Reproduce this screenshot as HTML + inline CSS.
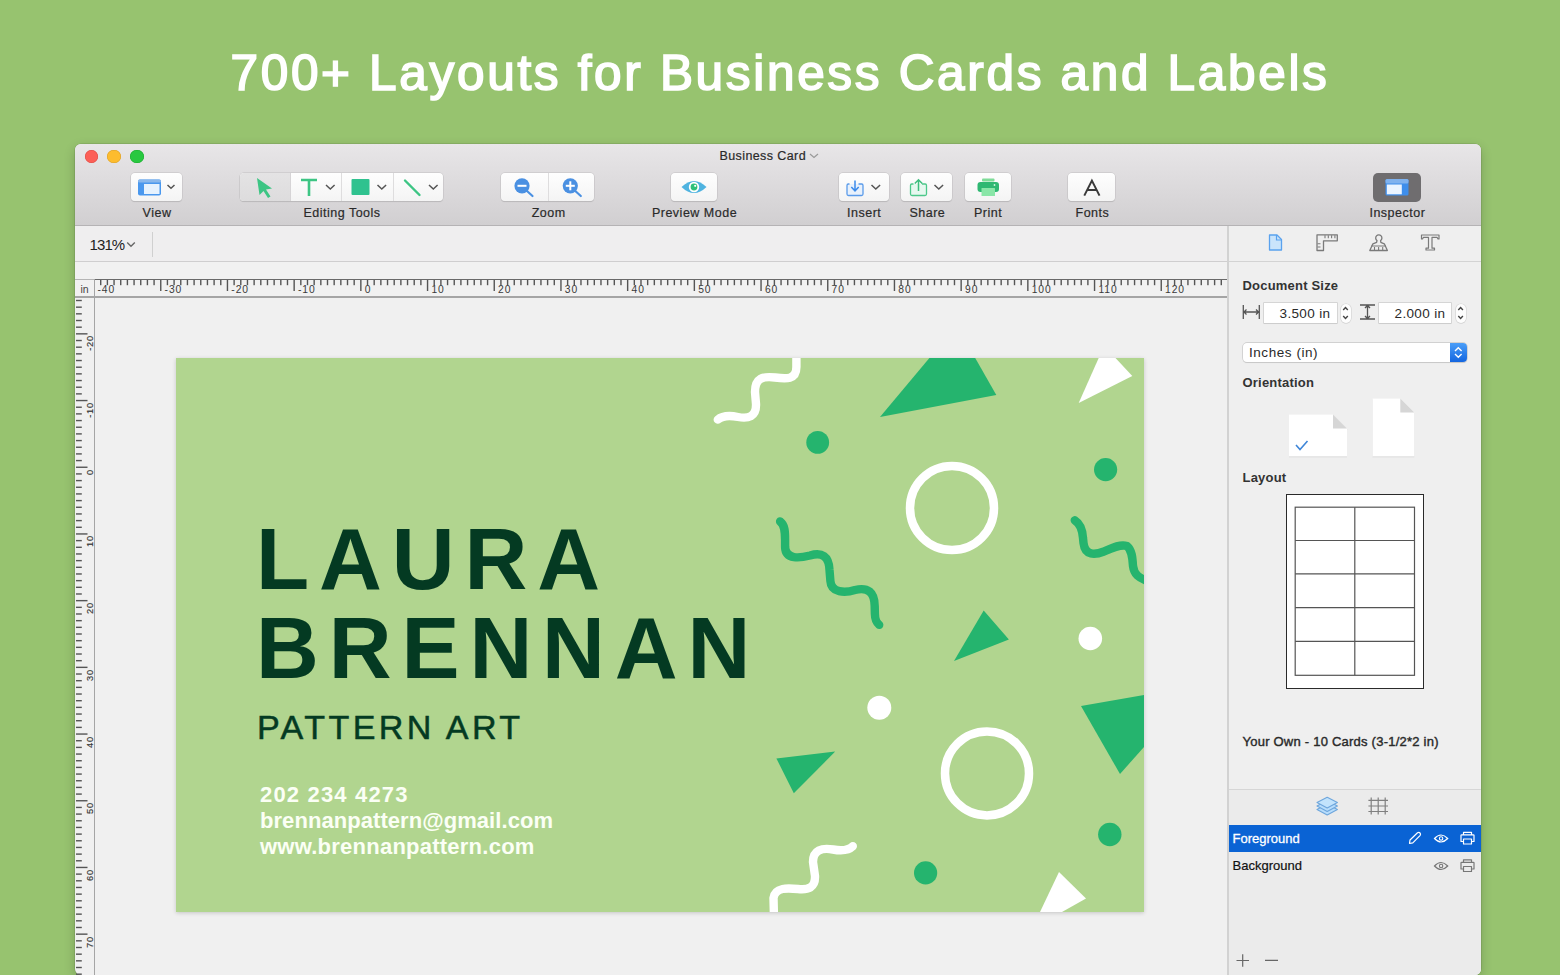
<!DOCTYPE html>
<html><head><meta charset="utf-8">
<style>
*{margin:0;padding:0;box-sizing:border-box}
html,body{width:1560px;height:975px;overflow:hidden;background:#97C36F;font-family:"Liberation Sans",sans-serif;position:relative}
.a{position:absolute}
.t{position:absolute;white-space:nowrap;line-height:1}
#title{left:0;width:1560px;top:48px;text-align:center;color:#fff;font-size:49.5px;letter-spacing:2.68px;-webkit-text-stroke:1.7px #fff}
#win{left:75px;top:144px;width:1406px;height:831px;background:#F0F0F0;border-radius:6px;box-shadow:0 0 0 0.5px rgba(0,0,0,0.15),0 4px 12px rgba(0,0,0,0.2)}
#tb{left:75px;top:144px;width:1406px;height:82px;background:linear-gradient(#E8E6E8,#D1CFD1);border-radius:6px 6px 0 0;border-bottom:1px solid #B5B3B5}
.tl{position:absolute;top:149.5px;width:13.4px;height:13.4px;border-radius:50%}
.btn{position:absolute;top:173px;height:28px;background:linear-gradient(#FEFEFE,#F4F4F4);border-radius:4px;box-shadow:0 0 0 0.6px #C4C2C4,0 0.6px 0.8px rgba(0,0,0,0.18)}
.lab{position:absolute;top:207.4px;font-size:12.5px;letter-spacing:0.5px;line-height:1;color:#2a2a2a;-webkit-text-stroke:0.2px #2a2a2a;white-space:nowrap;transform:translateX(-50%)}
.hl{position:absolute;top:285.3px;font-size:10.3px;letter-spacing:0.9px;line-height:1;color:#3a3a3a}
.vl{position:absolute;font-size:9.3px;letter-spacing:0.8px;line-height:1;color:#333;-webkit-text-stroke:0.15px #333;transform-origin:0 0;transform:rotate(-90deg) translateX(-100%)}
.ins{font-size:13px;color:#2a2a2a}
.hd{font-weight:bold;font-size:13px;letter-spacing:0.2px;color:#333}

</style></head><body>
<div id="title" class="t">700+ Layouts for Business Cards and Labels</div>
<div id="win" class="a"></div>
<div id="tb" class="a"></div>
<div class="tl" style="left:84.6px;background:#FC5F57;box-shadow:inset 0 0 0 0.6px #DD4B43"></div>
<div class="tl" style="left:107.4px;background:#FDBC2E;box-shadow:inset 0 0 0 0.6px #DC9F25"></div>
<div class="tl" style="left:130.2px;background:#28C840;box-shadow:inset 0 0 0 0.6px #1AAB2D"></div>
<div class="t" style="left:719.5px;top:149.8px;font-size:12.5px;letter-spacing:0.4px;color:#2a2a2a;-webkit-text-stroke:0.2px #2a2a2a">Business Card</div>
<svg class="a" style="left:809px;top:153px" width="10" height="6"><path d="M1 1 L5 4.5 L9 1" stroke="#9a9a9a" stroke-width="1.2" fill="none"/></svg>

<!-- toolbar buttons -->
<div class="btn" style="left:131px;width:51px"></div>
<div class="btn" style="left:240px;width:203px;overflow:hidden"><div class="a" style="left:0;top:0;width:50px;height:28px;background:linear-gradient(#E4E3E4,#DDDCDD)"></div><div class="a" style="left:50px;top:0;width:0.8px;height:28px;background:#D6D4D6"></div><div class="a" style="left:101px;top:0;width:0.8px;height:28px;background:#DEDDDE"></div><div class="a" style="left:153px;top:0;width:0.8px;height:28px;background:#DEDDDE"></div></div>
<div class="btn" style="left:501px;width:93px"><div class="a" style="left:47px;top:0;width:0.8px;height:28px;background:#DEDDDE"></div></div>
<div class="btn" style="left:671px;width:46px"></div>
<div class="btn" style="left:839px;width:50px"></div>
<div class="btn" style="left:901px;width:51px"></div>
<div class="btn" style="left:965px;width:46px"></div>
<div class="btn" style="left:1068px;width:47px"></div>
<div class="a" style="left:1373px;top:173px;width:48px;height:29px;border-radius:5px;background:#6F6D6F"></div>

<!-- toolbar icons -->
<svg class="a" style="left:0;top:0" width="1560" height="230">
  <!-- view icon -->
  <rect x="138" y="179.5" width="23" height="16" rx="2" fill="#4A98EE"/>
  <rect x="138" y="179.5" width="23" height="3" rx="1.5" fill="#8AB8EC"/>
  <rect x="144" y="184" width="15.5" height="10" fill="#E6F2FE"/>
  <path d="M167.5 185 L171 188.3 L174.5 185" stroke="#555" stroke-width="1.5" fill="none"/>
  <!-- arrow -->
  <path d="M257 178 L272 188.5 L266 189.5 L270.5 196.5 L268 198 L263.5 191 L259.5 195 Z" fill="#3DC584"/>
  <!-- T -->
  <path d="M301 180 H317 M309 180 V196" stroke="#3DC584" stroke-width="2.6" fill="none"/>
  <path d="M326 185 L330.3 189 L334.6 185" stroke="#555" stroke-width="1.5" fill="none"/>
  <!-- square -->
  <rect x="351.5" y="179" width="18" height="16" rx="1" fill="#2FC28F"/>
  <path d="M377.5 185 L381.8 189 L386.1 185" stroke="#555" stroke-width="1.5" fill="none"/>
  <!-- line -->
  <path d="M405 180.5 L419.5 195" stroke="#3DC584" stroke-width="2.4" stroke-linecap="round"/>
  <path d="M429 185 L433.3 189 L437.6 185" stroke="#555" stroke-width="1.5" fill="none"/>
  <!-- zoom minus -->
  <circle cx="522" cy="185.8" r="7.6" fill="#4A90E2"/>
  <rect x="517.5" y="184.8" width="9" height="2" fill="#fff"/>
  <path d="M527 191 L532.5 196" stroke="#4A90E2" stroke-width="2.2" stroke-linecap="round"/>
  <!-- zoom plus -->
  <circle cx="570.3" cy="185.8" r="7.6" fill="#4A90E2"/>
  <rect x="565.8" y="184.8" width="9" height="2" fill="#fff"/>
  <rect x="569.3" y="181.3" width="2" height="9" fill="#fff"/>
  <path d="M575.3 191 L580.8 196" stroke="#4A90E2" stroke-width="2.2" stroke-linecap="round"/>
  <!-- eye -->
  <path d="M681.5 187 Q694 175 706.5 187 Q694 199 681.5 187 Z" fill="#4FB3E0"/>
  <circle cx="694" cy="187" r="5.2" fill="#fff"/>
  <circle cx="694" cy="187" r="3.4" fill="#2EC07A"/>
  <circle cx="695.2" cy="185.8" r="1.1" fill="#fff"/>
  <!-- insert -->
  <path d="M849.5 184 H848.3 Q847 184 847 185.5 V194 Q847 195.5 848.5 195.5 H861.5 Q863 195.5 863 194 V185.5 Q863 184 861.7 184 H858.5" fill="#E8F1FC" stroke="#5A9BEA" stroke-width="1.3"/>
  <path d="M855 180.5 V190.5 M851.3 187 L855 190.8 L858.7 187" stroke="#3C8BEA" stroke-width="1.5" fill="none"/>
  <path d="M871.5 185 L875.8 189 L880.1 185" stroke="#555" stroke-width="1.5" fill="none"/>
  <!-- share -->
  <path d="M913.5 184 H911.8 Q910.5 184 910.5 185.5 V194 Q910.5 195.5 912 195.5 H925 Q926.5 195.5 926.5 194 V185.5 Q926.5 184 925.2 184 H922" fill="#E6F8EF" stroke="#4CC88A" stroke-width="1.3"/>
  <path d="M918.5 191 V180 M914.8 183.5 L918.5 179.8 L922.2 183.5" stroke="#3DBE7E" stroke-width="1.5" fill="none"/>
  <path d="M934.5 185 L938.8 189 L943.1 185" stroke="#555" stroke-width="1.5" fill="none"/>
  <!-- print -->
  <rect x="982" y="178.5" width="12.5" height="3" rx="1" fill="#7EDC98"/>
  <rect x="977.5" y="182" width="21.5" height="10" rx="3" fill="#2FB872"/>
  <rect x="981.5" y="188" width="13.5" height="8" rx="0.5" fill="#8AE6A8"/>
  <circle cx="994.5" cy="185" r="0.9" fill="#CFF5DD"/>
  <!-- fonts A -->
  <path d="M1084.3 195.6 L1091.9 180.6 L1099.5 195.6 M1087.2 190 H1096.6" stroke="#3a3a3a" stroke-width="2" fill="none"/>
  <!-- inspector icon -->
  <rect x="1385.5" y="179" width="23" height="16.5" rx="1.5" fill="#3E8EEB"/>
  <rect x="1385.5" y="179" width="23" height="4.5" rx="1.5" fill="#7FB2EE"/>
  <rect x="1386.8" y="184.5" width="15" height="9.8" fill="#EAF4FF"/>
</svg>

<div class="lab" style="left:157px">View</div>
<div class="lab" style="left:342px">Editing Tools</div>
<div class="lab" style="left:548.7px">Zoom</div>
<div class="lab" style="left:694.5px">Preview Mode</div>
<div class="lab" style="left:864.2px">Insert</div>
<div class="lab" style="left:927.4px">Share</div>
<div class="lab" style="left:988px">Print</div>
<div class="lab" style="left:1092.4px">Fonts</div>
<div class="lab" style="left:1397.4px">Inspector</div>

<!-- zoom row -->
<div class="a" style="left:75px;top:226px;width:1153px;height:36px;background:#EFEEEF;border-bottom:1px solid #CFCECF"></div>
<div class="t" style="left:89.5px;top:236.8px;font-size:15px;letter-spacing:-0.9px;color:#222">131%</div>
<svg class="a" style="left:126px;top:241px" width="10" height="7"><path d="M1.2 1.5 L5 5.2 L8.8 1.5" stroke="#666" stroke-width="1.4" fill="none"/></svg>
<div class="a" style="left:152px;top:232px;width:1px;height:25px;background:#D0D0D0"></div>

<!-- ruler -->
<div class="a" style="left:75px;top:262px;width:1153px;height:35px;background:#F1F1F1"></div>
<div class="a" style="left:75px;top:279px;width:19px;height:1px;background:#B5B5B5"></div>
<div class="a" style="left:94px;top:278.8px;width:1134px;height:1.6px;background:#6A6A6A"></div>
<div class="a" style="left:75px;top:296px;width:1153px;height:1.5px;background:#A5A5A5"></div>
<div class="a" style="left:93.6px;top:279px;width:1.4px;height:696px;background:#A5A5A5"></div>
<svg class="a" style="left:0;top:0" width="1560" height="975" fill="#555"><rect x="100.02" y="280" width="1.4" height="5.2"/><rect x="106.69" y="280" width="1.4" height="5.2"/><rect x="113.36" y="280" width="1.4" height="5.2"/><rect x="120.03" y="280" width="1.4" height="5.2"/><rect x="126.70" y="280" width="1.4" height="5.2"/><rect x="133.37" y="280" width="1.4" height="5.2"/><rect x="140.04" y="280" width="1.4" height="5.2"/><rect x="146.71" y="280" width="1.4" height="5.2"/><rect x="153.38" y="280" width="1.4" height="5.2"/><rect x="160.05" y="280" width="1.4" height="11"/><rect x="166.72" y="280" width="1.4" height="5.2"/><rect x="173.39" y="280" width="1.4" height="5.2"/><rect x="180.06" y="280" width="1.4" height="5.2"/><rect x="186.73" y="280" width="1.4" height="5.2"/><rect x="193.40" y="280" width="1.4" height="5.2"/><rect x="200.07" y="280" width="1.4" height="5.2"/><rect x="206.74" y="280" width="1.4" height="5.2"/><rect x="213.41" y="280" width="1.4" height="5.2"/><rect x="220.08" y="280" width="1.4" height="5.2"/><rect x="226.75" y="280" width="1.4" height="11"/><rect x="233.42" y="280" width="1.4" height="5.2"/><rect x="240.09" y="280" width="1.4" height="5.2"/><rect x="246.76" y="280" width="1.4" height="5.2"/><rect x="253.43" y="280" width="1.4" height="5.2"/><rect x="260.10" y="280" width="1.4" height="5.2"/><rect x="266.77" y="280" width="1.4" height="5.2"/><rect x="273.44" y="280" width="1.4" height="5.2"/><rect x="280.11" y="280" width="1.4" height="5.2"/><rect x="286.78" y="280" width="1.4" height="5.2"/><rect x="293.45" y="280" width="1.4" height="11"/><rect x="300.12" y="280" width="1.4" height="5.2"/><rect x="306.79" y="280" width="1.4" height="5.2"/><rect x="313.46" y="280" width="1.4" height="5.2"/><rect x="320.13" y="280" width="1.4" height="5.2"/><rect x="326.80" y="280" width="1.4" height="5.2"/><rect x="333.47" y="280" width="1.4" height="5.2"/><rect x="340.14" y="280" width="1.4" height="5.2"/><rect x="346.81" y="280" width="1.4" height="5.2"/><rect x="353.48" y="280" width="1.4" height="5.2"/><rect x="360.15" y="280" width="1.4" height="11"/><rect x="366.82" y="280" width="1.4" height="5.2"/><rect x="373.49" y="280" width="1.4" height="5.2"/><rect x="380.16" y="280" width="1.4" height="5.2"/><rect x="386.83" y="280" width="1.4" height="5.2"/><rect x="393.50" y="280" width="1.4" height="5.2"/><rect x="400.17" y="280" width="1.4" height="5.2"/><rect x="406.84" y="280" width="1.4" height="5.2"/><rect x="413.51" y="280" width="1.4" height="5.2"/><rect x="420.18" y="280" width="1.4" height="5.2"/><rect x="426.85" y="280" width="1.4" height="11"/><rect x="433.52" y="280" width="1.4" height="5.2"/><rect x="440.19" y="280" width="1.4" height="5.2"/><rect x="446.86" y="280" width="1.4" height="5.2"/><rect x="453.53" y="280" width="1.4" height="5.2"/><rect x="460.20" y="280" width="1.4" height="5.2"/><rect x="466.87" y="280" width="1.4" height="5.2"/><rect x="473.54" y="280" width="1.4" height="5.2"/><rect x="480.21" y="280" width="1.4" height="5.2"/><rect x="486.88" y="280" width="1.4" height="5.2"/><rect x="493.55" y="280" width="1.4" height="11"/><rect x="500.22" y="280" width="1.4" height="5.2"/><rect x="506.89" y="280" width="1.4" height="5.2"/><rect x="513.56" y="280" width="1.4" height="5.2"/><rect x="520.23" y="280" width="1.4" height="5.2"/><rect x="526.90" y="280" width="1.4" height="5.2"/><rect x="533.57" y="280" width="1.4" height="5.2"/><rect x="540.24" y="280" width="1.4" height="5.2"/><rect x="546.91" y="280" width="1.4" height="5.2"/><rect x="553.58" y="280" width="1.4" height="5.2"/><rect x="560.25" y="280" width="1.4" height="11"/><rect x="566.92" y="280" width="1.4" height="5.2"/><rect x="573.59" y="280" width="1.4" height="5.2"/><rect x="580.26" y="280" width="1.4" height="5.2"/><rect x="586.93" y="280" width="1.4" height="5.2"/><rect x="593.60" y="280" width="1.4" height="5.2"/><rect x="600.27" y="280" width="1.4" height="5.2"/><rect x="606.94" y="280" width="1.4" height="5.2"/><rect x="613.61" y="280" width="1.4" height="5.2"/><rect x="620.28" y="280" width="1.4" height="5.2"/><rect x="626.95" y="280" width="1.4" height="11"/><rect x="633.62" y="280" width="1.4" height="5.2"/><rect x="640.29" y="280" width="1.4" height="5.2"/><rect x="646.96" y="280" width="1.4" height="5.2"/><rect x="653.63" y="280" width="1.4" height="5.2"/><rect x="660.30" y="280" width="1.4" height="5.2"/><rect x="666.97" y="280" width="1.4" height="5.2"/><rect x="673.64" y="280" width="1.4" height="5.2"/><rect x="680.31" y="280" width="1.4" height="5.2"/><rect x="686.98" y="280" width="1.4" height="5.2"/><rect x="693.65" y="280" width="1.4" height="11"/><rect x="700.32" y="280" width="1.4" height="5.2"/><rect x="706.99" y="280" width="1.4" height="5.2"/><rect x="713.66" y="280" width="1.4" height="5.2"/><rect x="720.33" y="280" width="1.4" height="5.2"/><rect x="727.00" y="280" width="1.4" height="5.2"/><rect x="733.67" y="280" width="1.4" height="5.2"/><rect x="740.34" y="280" width="1.4" height="5.2"/><rect x="747.01" y="280" width="1.4" height="5.2"/><rect x="753.68" y="280" width="1.4" height="5.2"/><rect x="760.35" y="280" width="1.4" height="11"/><rect x="767.02" y="280" width="1.4" height="5.2"/><rect x="773.69" y="280" width="1.4" height="5.2"/><rect x="780.36" y="280" width="1.4" height="5.2"/><rect x="787.03" y="280" width="1.4" height="5.2"/><rect x="793.70" y="280" width="1.4" height="5.2"/><rect x="800.37" y="280" width="1.4" height="5.2"/><rect x="807.04" y="280" width="1.4" height="5.2"/><rect x="813.71" y="280" width="1.4" height="5.2"/><rect x="820.38" y="280" width="1.4" height="5.2"/><rect x="827.05" y="280" width="1.4" height="11"/><rect x="833.72" y="280" width="1.4" height="5.2"/><rect x="840.39" y="280" width="1.4" height="5.2"/><rect x="847.06" y="280" width="1.4" height="5.2"/><rect x="853.73" y="280" width="1.4" height="5.2"/><rect x="860.40" y="280" width="1.4" height="5.2"/><rect x="867.07" y="280" width="1.4" height="5.2"/><rect x="873.74" y="280" width="1.4" height="5.2"/><rect x="880.41" y="280" width="1.4" height="5.2"/><rect x="887.08" y="280" width="1.4" height="5.2"/><rect x="893.75" y="280" width="1.4" height="11"/><rect x="900.42" y="280" width="1.4" height="5.2"/><rect x="907.09" y="280" width="1.4" height="5.2"/><rect x="913.76" y="280" width="1.4" height="5.2"/><rect x="920.43" y="280" width="1.4" height="5.2"/><rect x="927.10" y="280" width="1.4" height="5.2"/><rect x="933.77" y="280" width="1.4" height="5.2"/><rect x="940.44" y="280" width="1.4" height="5.2"/><rect x="947.11" y="280" width="1.4" height="5.2"/><rect x="953.78" y="280" width="1.4" height="5.2"/><rect x="960.45" y="280" width="1.4" height="11"/><rect x="967.12" y="280" width="1.4" height="5.2"/><rect x="973.79" y="280" width="1.4" height="5.2"/><rect x="980.46" y="280" width="1.4" height="5.2"/><rect x="987.13" y="280" width="1.4" height="5.2"/><rect x="993.80" y="280" width="1.4" height="5.2"/><rect x="1000.47" y="280" width="1.4" height="5.2"/><rect x="1007.14" y="280" width="1.4" height="5.2"/><rect x="1013.81" y="280" width="1.4" height="5.2"/><rect x="1020.48" y="280" width="1.4" height="5.2"/><rect x="1027.15" y="280" width="1.4" height="11"/><rect x="1033.82" y="280" width="1.4" height="5.2"/><rect x="1040.49" y="280" width="1.4" height="5.2"/><rect x="1047.16" y="280" width="1.4" height="5.2"/><rect x="1053.83" y="280" width="1.4" height="5.2"/><rect x="1060.50" y="280" width="1.4" height="5.2"/><rect x="1067.17" y="280" width="1.4" height="5.2"/><rect x="1073.84" y="280" width="1.4" height="5.2"/><rect x="1080.51" y="280" width="1.4" height="5.2"/><rect x="1087.18" y="280" width="1.4" height="5.2"/><rect x="1093.85" y="280" width="1.4" height="11"/><rect x="1100.52" y="280" width="1.4" height="5.2"/><rect x="1107.19" y="280" width="1.4" height="5.2"/><rect x="1113.86" y="280" width="1.4" height="5.2"/><rect x="1120.53" y="280" width="1.4" height="5.2"/><rect x="1127.20" y="280" width="1.4" height="5.2"/><rect x="1133.87" y="280" width="1.4" height="5.2"/><rect x="1140.54" y="280" width="1.4" height="5.2"/><rect x="1147.21" y="280" width="1.4" height="5.2"/><rect x="1153.88" y="280" width="1.4" height="5.2"/><rect x="1160.55" y="280" width="1.4" height="11"/><rect x="1167.22" y="280" width="1.4" height="5.2"/><rect x="1173.89" y="280" width="1.4" height="5.2"/><rect x="1180.56" y="280" width="1.4" height="5.2"/><rect x="1187.23" y="280" width="1.4" height="5.2"/><rect x="1193.90" y="280" width="1.4" height="5.2"/><rect x="1200.57" y="280" width="1.4" height="5.2"/><rect x="1207.24" y="280" width="1.4" height="5.2"/><rect x="1213.91" y="280" width="1.4" height="5.2"/><rect x="1220.58" y="280" width="1.4" height="5.2"/><rect x="76" y="299.80" width="5.8" height="1.4"/><rect x="76" y="306.47" width="5.8" height="1.4"/><rect x="76" y="313.14" width="5.8" height="1.4"/><rect x="76" y="319.81" width="5.8" height="1.4"/><rect x="76" y="326.48" width="5.8" height="1.4"/><rect x="76" y="333.15" width="11.5" height="1.4"/><rect x="76" y="339.82" width="5.8" height="1.4"/><rect x="76" y="346.49" width="5.8" height="1.4"/><rect x="76" y="353.16" width="5.8" height="1.4"/><rect x="76" y="359.83" width="5.8" height="1.4"/><rect x="76" y="366.50" width="5.8" height="1.4"/><rect x="76" y="373.17" width="5.8" height="1.4"/><rect x="76" y="379.84" width="5.8" height="1.4"/><rect x="76" y="386.51" width="5.8" height="1.4"/><rect x="76" y="393.18" width="5.8" height="1.4"/><rect x="76" y="399.85" width="11.5" height="1.4"/><rect x="76" y="406.52" width="5.8" height="1.4"/><rect x="76" y="413.19" width="5.8" height="1.4"/><rect x="76" y="419.86" width="5.8" height="1.4"/><rect x="76" y="426.53" width="5.8" height="1.4"/><rect x="76" y="433.20" width="5.8" height="1.4"/><rect x="76" y="439.87" width="5.8" height="1.4"/><rect x="76" y="446.54" width="5.8" height="1.4"/><rect x="76" y="453.21" width="5.8" height="1.4"/><rect x="76" y="459.88" width="5.8" height="1.4"/><rect x="76" y="466.55" width="11.5" height="1.4"/><rect x="76" y="473.22" width="5.8" height="1.4"/><rect x="76" y="479.89" width="5.8" height="1.4"/><rect x="76" y="486.56" width="5.8" height="1.4"/><rect x="76" y="493.23" width="5.8" height="1.4"/><rect x="76" y="499.90" width="5.8" height="1.4"/><rect x="76" y="506.57" width="5.8" height="1.4"/><rect x="76" y="513.24" width="5.8" height="1.4"/><rect x="76" y="519.91" width="5.8" height="1.4"/><rect x="76" y="526.58" width="5.8" height="1.4"/><rect x="76" y="533.25" width="11.5" height="1.4"/><rect x="76" y="539.92" width="5.8" height="1.4"/><rect x="76" y="546.59" width="5.8" height="1.4"/><rect x="76" y="553.26" width="5.8" height="1.4"/><rect x="76" y="559.93" width="5.8" height="1.4"/><rect x="76" y="566.60" width="5.8" height="1.4"/><rect x="76" y="573.27" width="5.8" height="1.4"/><rect x="76" y="579.94" width="5.8" height="1.4"/><rect x="76" y="586.61" width="5.8" height="1.4"/><rect x="76" y="593.28" width="5.8" height="1.4"/><rect x="76" y="599.95" width="11.5" height="1.4"/><rect x="76" y="606.62" width="5.8" height="1.4"/><rect x="76" y="613.29" width="5.8" height="1.4"/><rect x="76" y="619.96" width="5.8" height="1.4"/><rect x="76" y="626.63" width="5.8" height="1.4"/><rect x="76" y="633.30" width="5.8" height="1.4"/><rect x="76" y="639.97" width="5.8" height="1.4"/><rect x="76" y="646.64" width="5.8" height="1.4"/><rect x="76" y="653.31" width="5.8" height="1.4"/><rect x="76" y="659.98" width="5.8" height="1.4"/><rect x="76" y="666.65" width="11.5" height="1.4"/><rect x="76" y="673.32" width="5.8" height="1.4"/><rect x="76" y="679.99" width="5.8" height="1.4"/><rect x="76" y="686.66" width="5.8" height="1.4"/><rect x="76" y="693.33" width="5.8" height="1.4"/><rect x="76" y="700.00" width="5.8" height="1.4"/><rect x="76" y="706.67" width="5.8" height="1.4"/><rect x="76" y="713.34" width="5.8" height="1.4"/><rect x="76" y="720.01" width="5.8" height="1.4"/><rect x="76" y="726.68" width="5.8" height="1.4"/><rect x="76" y="733.35" width="11.5" height="1.4"/><rect x="76" y="740.02" width="5.8" height="1.4"/><rect x="76" y="746.69" width="5.8" height="1.4"/><rect x="76" y="753.36" width="5.8" height="1.4"/><rect x="76" y="760.03" width="5.8" height="1.4"/><rect x="76" y="766.70" width="5.8" height="1.4"/><rect x="76" y="773.37" width="5.8" height="1.4"/><rect x="76" y="780.04" width="5.8" height="1.4"/><rect x="76" y="786.71" width="5.8" height="1.4"/><rect x="76" y="793.38" width="5.8" height="1.4"/><rect x="76" y="800.05" width="11.5" height="1.4"/><rect x="76" y="806.72" width="5.8" height="1.4"/><rect x="76" y="813.39" width="5.8" height="1.4"/><rect x="76" y="820.06" width="5.8" height="1.4"/><rect x="76" y="826.73" width="5.8" height="1.4"/><rect x="76" y="833.40" width="5.8" height="1.4"/><rect x="76" y="840.07" width="5.8" height="1.4"/><rect x="76" y="846.74" width="5.8" height="1.4"/><rect x="76" y="853.41" width="5.8" height="1.4"/><rect x="76" y="860.08" width="5.8" height="1.4"/><rect x="76" y="866.75" width="11.5" height="1.4"/><rect x="76" y="873.42" width="5.8" height="1.4"/><rect x="76" y="880.09" width="5.8" height="1.4"/><rect x="76" y="886.76" width="5.8" height="1.4"/><rect x="76" y="893.43" width="5.8" height="1.4"/><rect x="76" y="900.10" width="5.8" height="1.4"/><rect x="76" y="906.77" width="5.8" height="1.4"/><rect x="76" y="913.44" width="5.8" height="1.4"/><rect x="76" y="920.11" width="5.8" height="1.4"/><rect x="76" y="926.78" width="5.8" height="1.4"/><rect x="76" y="933.45" width="11.5" height="1.4"/><rect x="76" y="940.12" width="5.8" height="1.4"/><rect x="76" y="946.79" width="5.8" height="1.4"/><rect x="76" y="953.46" width="5.8" height="1.4"/><rect x="76" y="960.13" width="5.8" height="1.4"/><rect x="76" y="966.80" width="5.8" height="1.4"/><rect x="76" y="973.47" width="5.8" height="1.4"/></svg>
<div class="t" style="left:80.5px;top:283.5px;font-size:10.5px;color:#444">in</div>
<div class="hl" style="left:97.5px">-40</div><div class="hl" style="left:164.6px">-30</div><div class="hl" style="left:231.3px">-20</div><div class="hl" style="left:298.0px">-10</div><div class="hl" style="left:364.7px">0</div><div class="hl" style="left:431.4px">10</div><div class="hl" style="left:498.1px">20</div><div class="hl" style="left:564.8px">30</div><div class="hl" style="left:631.5px">40</div><div class="hl" style="left:698.2px">50</div><div class="hl" style="left:764.9px">60</div><div class="hl" style="left:831.6px">70</div><div class="hl" style="left:898.3px">80</div><div class="hl" style="left:965.0px">90</div><div class="hl" style="left:1031.7px">100</div><div class="hl" style="left:1098.4px">110</div><div class="hl" style="left:1165.1px">120</div>
<div class="vl" style="left:86.3px;top:335.3px">-20</div><div class="vl" style="left:86.3px;top:402.0px">-10</div><div class="vl" style="left:86.3px;top:468.7px">0</div><div class="vl" style="left:86.3px;top:535.4px">10</div><div class="vl" style="left:86.3px;top:602.1px">20</div><div class="vl" style="left:86.3px;top:668.8px">30</div><div class="vl" style="left:86.3px;top:735.5px">40</div><div class="vl" style="left:86.3px;top:802.2px">50</div><div class="vl" style="left:86.3px;top:868.9px">60</div><div class="vl" style="left:86.3px;top:935.6px">70</div>

<!-- card -->
<div id="card" class="a" style="left:176px;top:358px;width:968px;height:554px;background:#B1D58F;box-shadow:0 1px 4px rgba(0,0,0,0.18);overflow:hidden"></div>

<!-- inspector -->
<div class="a" style="left:1227px;top:226px;width:254px;height:749px;background:#EFEFEF;border-left:2px solid #D2D2D2;border-radius:0 0 6px 0"></div>
<div class="a" style="left:1229px;top:790px;width:252px;height:185px;background:#EBEBEB;border-radius:0 0 6px 0"></div>
<div class="a" style="left:1229px;top:261px;width:252px;height:1px;background:#D3D3D3"></div>

<!-- card content -->
<div class="t" style="left:256px;top:515.2px;font-size:87px;font-weight:bold;color:#043A22;letter-spacing:9.9px">LAURA</div>
<div class="t" style="left:256px;top:603.5px;font-size:87px;font-weight:bold;color:#043A22;letter-spacing:9.9px">BRENNAN</div>
<div class="t" style="left:257px;top:710px;font-size:34.1px;color:#043A22;letter-spacing:3.4px;-webkit-text-stroke:0.5px #043A22">PATTERN ART</div>
<div class="t" style="left:260px;top:784.4px;font-size:22px;font-weight:bold;color:#FBFFF5;letter-spacing:1.17px">202 234 4273</div>
<div class="t" style="left:260px;top:810px;font-size:22px;font-weight:bold;color:#FBFFF5;letter-spacing:0.06px">brennanpattern@gmail.com</div>
<div class="t" style="left:260px;top:836px;font-size:22px;font-weight:bold;color:#FBFFF5;letter-spacing:0.24px">www.brennanpattern.com</div>

<svg class="a" style="left:176px;top:358px" width="968" height="554" viewBox="176 358 968 554">
  <g fill="#25B46E">
    <circle cx="817.7" cy="442.4" r="11.4"/>
    <circle cx="1105.6" cy="469.6" r="11.6"/>
    <circle cx="1109.8" cy="834.5" r="11.7"/>
    <circle cx="925.6" cy="872.9" r="11.6"/>
    <polygon points="880,417 929.4,358 975.2,358 996.3,395"/>
    <polygon points="983.7,610.5 1008.9,639.5 954,661.1"/>
    <polygon points="1081,706 1144,695 1144,747 1120,774"/>
    <polygon points="776.4,758.4 835.2,751.6 793.8,793.3"/>
  </g>
  <g fill="#FFFFFF">
    <circle cx="1090.3" cy="638.5" r="11.8"/>
    <circle cx="879.3" cy="707.7" r="12"/>
    <polygon points="1078.7,403 1098.7,358 1115.5,358 1132.3,376"/>
    <polygon points="1059,872 1086,898.5 1062,912 1040,912"/>
  </g>
  <g fill="none" stroke="#FFFFFF" stroke-width="8.5">
    <circle cx="952" cy="508" r="42"/>
    <circle cx="987" cy="773.4" r="42"/>
  </g>
  <g fill="none" stroke-linecap="round" stroke-linejoin="round" stroke-width="8.4">
    <path stroke="#FFFFFF" d="M796.4,352 L796.4,367 C796.4,380 786,379 775,377.5 C763,376 755,378 755,392 L756,404 C756.5,417 748,419 738,417 C728,415 722,416 717.8,419.6"/>
    <path stroke="#25B46E" d="M780.1,521.5 C785,525 785.1,532 785.1,540 L785.1,547 C785.5,560 800,558 810,555.5 C822,552 829,556 829.5,570 L830.4,581 C831,593 845,593 855,590 C868,587 874.5,592 874.7,606 L874.9,614 C875,621 877,623 879.2,624.9"/>
    <path stroke="#25B46E" d="M1074.8,520.3 C1080,523.5 1082.5,530 1083,538 L1083.5,543 C1085,556 1095,555 1104,551.5 C1112,548 1120,544 1127,546 C1132,550 1132.5,558 1133,566 C1134,574 1138,578 1150,582"/>
    <path stroke="#FFFFFF" d="M852.8,846.3 C848,851 841,851 833,849.5 C822,847.5 813,850 813,862 L815,876 C815.5,888 808,890 798,889 C788,888 775,887 773.5,898 L774,918"/>
  </g>
</svg>

<!-- inspector tabs -->
<svg class="a" style="left:0;top:0" width="1560" height="975">
  <!-- doc icon -->
  <path d="M1269.5 235 H1277 L1281.5 239.5 V250 H1269.5 Z" fill="#C9E4FB" stroke="#5AA2EE" stroke-width="1.3" stroke-linejoin="round"/>
  <path d="M1276.5 235 V240 H1281.5" fill="none" stroke="#5AA2EE" stroke-width="1.2"/>
  <!-- ruler icon -->
  <path d="M1317 234.8 H1337.3 V240.8 H1323.5 V250.5 H1317 Z" fill="none" stroke="#7A7A7A" stroke-width="1.3" stroke-linejoin="round"/>
  <path d="M1325 235.3 V238.3 M1328.3 235.3 V238.3 M1331.6 235.3 V238.3 M1334.9 235.3 V238.3 M1317.5 243.8 H1320.5 M1317.5 247 H1320.5" stroke="#7A7A7A" stroke-width="1.1"/>
  <!-- brush icon -->
  <path d="M1377 240.5 A3.1 3.1 0 1 1 1380.6 240.5 L1380.8 242.3 L1384.3 243.8 L1387.4 250.5 H1369.8 L1372.9 243.8 L1376.6 242.3 Z" fill="none" stroke="#7A7A7A" stroke-width="1.3" stroke-linejoin="round"/>
  <path d="M1371.3 246 H1386 M1374.5 247 V250 M1378.6 247 V250 M1382.7 247 V250" stroke="#7A7A7A" stroke-width="1.1"/>
  <!-- T icon -->
  <path d="M1421.5 235 H1439 V239 H1438 L1437 237.3 H1432 V248.2 H1434.5 V250 H1426 V248.2 H1428.5 V237.3 H1423.5 L1422.5 239 H1421.5 Z" fill="none" stroke="#7A7A7A" stroke-width="1.2" stroke-linejoin="round"/>
</svg>

<div class="t hd" style="left:1242.5px;top:278.6px">Document Size</div>

<div class="a" style="left:1264px;top:302.5px;width:72.5px;height:20px;background:#fff;box-shadow:0 0 0 0.7px #CBCBCB,0 0.7px 0.6px rgba(0,0,0,0.12)"></div>
<div class="a" style="left:1340.5px;top:303.5px;width:10px;height:19.5px;background:#FDFDFD;border-radius:5px;box-shadow:0 0 0 0.6px #D0D0D0,0 0.6px 0.6px rgba(0,0,0,0.1)"></div>
<div class="a" style="left:1379px;top:302.5px;width:72px;height:20px;background:#fff;box-shadow:0 0 0 0.7px #CBCBCB,0 0.7px 0.6px rgba(0,0,0,0.12)"></div>
<div class="a" style="left:1455.5px;top:303.5px;width:10px;height:19.5px;background:#FDFDFD;border-radius:5px;box-shadow:0 0 0 0.6px #D0D0D0,0 0.6px 0.6px rgba(0,0,0,0.1)"></div>
<div class="t" style="left:1264px;width:66.4px;text-align:right;top:306.5px;font-size:13.5px;letter-spacing:0.35px;color:#2a2a2a">3.500 in</div>
<div class="t" style="left:1379px;width:66.4px;text-align:right;top:306.5px;font-size:13.5px;letter-spacing:0.35px;color:#2a2a2a">2.000 in</div>
<svg class="a" style="left:0;top:0" width="1560" height="975">
  <path d="M1243.3 305 V319 M1259.3 305 V319 M1244 312 H1258.5 M1246.5 309.5 L1244 312 L1246.5 314.5 M1256 309.5 L1258.5 312 L1256 314.5" fill="none" stroke="#555" stroke-width="1.3"/>
  <path d="M1360 305 H1375 M1360 319 H1375 M1367.5 305.5 V318.5 M1365 308 L1367.5 305.5 L1370 308 M1365 316 L1367.5 318.5 L1370 316" fill="none" stroke="#555" stroke-width="1.3"/>
  <path d="M1343.2 310 L1345.5 307.5 L1347.8 310 M1343.2 316 L1345.5 318.5 L1347.8 316" fill="none" stroke="#444" stroke-width="1.4"/>
  <path d="M1458.3 310 L1460.6 307.5 L1462.9 310 M1458.3 316 L1460.6 318.5 L1462.9 316" fill="none" stroke="#444" stroke-width="1.4"/>
</svg>

<div class="a" style="left:1243px;top:343px;width:223.5px;height:19px;background:#fff;border-radius:4px;box-shadow:0 0 0 0.7px #C8C8C8,0 0.8px 0.8px rgba(0,0,0,0.15);overflow:hidden"><div class="a" style="left:207px;top:0;width:16.5px;height:19px;background:linear-gradient(#4A9EF8,#1466E0)"></div></div>
<svg class="a" style="left:1450px;top:343px" width="17" height="19"><path d="M5 8 L8.3 4.8 L11.6 8 M5 11 L8.3 14.2 L11.6 11" fill="none" stroke="#fff" stroke-width="1.4"/></svg>
<div class="t ins" style="left:1249px;top:345.8px;font-size:13.5px;letter-spacing:0.55px">Inches (in)</div>

<div class="t hd" style="left:1242.5px;top:376px">Orientation</div>
<svg class="a" style="left:0;top:0" width="1560" height="975">
  <defs><filter id="sh" x="-20%" y="-20%" width="140%" height="140%"><feDropShadow dx="0" dy="0.6" stdDeviation="0.6" flood-color="#000" flood-opacity="0.22"/></filter></defs>
  <path d="M1289 414.6 H1333 L1347 428.6 V456.3 H1289 Z" fill="#fff" filter="url(#sh)"/>
  <path d="M1333 414.6 V428.6 H1347 Z" fill="#D6D6D6"/>
  <path d="M1296 445 L1300 449.5 L1307.5 441" fill="none" stroke="#3F86D8" stroke-width="1.6"/>
  <path d="M1372.6 398.6 H1400.3 L1414.3 412.6 V456.3 H1372.6 Z" fill="#fff" filter="url(#sh)"/>
  <path d="M1400.3 398.6 V412.6 H1414.3 Z" fill="#D6D6D6"/>
</svg>

<div class="t hd" style="left:1242.5px;top:470.7px">Layout</div>
<div class="a" style="left:1286px;top:494px;width:138px;height:194.5px;background:#fff;border:1.8px solid #2A2A2A"></div>
<svg class="a" style="left:0;top:0" width="1560" height="975">
  <g fill="none" stroke="#555" stroke-width="1.2">
    <rect x="1295.2" y="507.2" width="119.3" height="168.1"/>
    <path d="M1354.8 507.2 V675.3 M1295.2 540.5 H1414.5 M1295.2 573.9 H1414.5 M1295.2 607.6 H1414.5 M1295.2 641.3 H1414.5"/>
  </g>
</svg>

<div class="t" style="left:1242.5px;top:735.2px;font-size:13px;letter-spacing:0.23px;color:#2a2a2a;-webkit-text-stroke:0.4px #2a2a2a">Your Own - 10 Cards (3-1/2*2 in)</div>
<div class="a" style="left:1229px;top:789px;width:252px;height:1px;background:#D6D6D6"></div>
<svg class="a" style="left:0;top:0" width="1560" height="975">
  <!-- layers icon -->
  <path d="M1317 809.5 L1327.2 815 L1337.4 809.5 L1327.2 804 Z" fill="#B8DDFB" stroke="#6EA6DC" stroke-width="1.1" stroke-linejoin="round"/>
  <path d="M1317 806 L1327.2 811.5 L1337.4 806 L1327.2 800.5 Z" fill="#B8DDFB" stroke="#6EA6DC" stroke-width="1.1" stroke-linejoin="round"/>
  <path d="M1317 802.5 L1327.2 797.2 L1337.4 802.5 L1327.2 808 Z" fill="#C2E3FC" stroke="#6EA6DC" stroke-width="1.1" stroke-linejoin="round"/>
  <!-- grid icon -->
  <path d="M1371.2 797.5 V814.5 M1378.2 797.5 V814.5 M1385.2 797.5 V814.5 M1368.4 800.4 H1388 M1368.4 806 H1388 M1368.4 811.5 H1388" stroke="#808080" stroke-width="1.2"/>
</svg>

<div class="a" style="left:1228.5px;top:825.3px;width:252.5px;height:26.4px;background:#0A63D4"></div>
<div class="t" style="left:1232.5px;top:831.8px;font-size:13px;color:#fff;-webkit-text-stroke:0.3px #fff">Foreground</div>
<div class="t" style="left:1232.5px;top:859px;font-size:13px;color:#111;-webkit-text-stroke:0.2px #111">Background</div>
<svg class="a" style="left:0;top:0" width="1560" height="975">
  <!-- pencil -->
  <path d="M1409.5 843.5 L1410 840 L1417.5 832.8 Q1419 832 1420 833 Q1421 834 1420.2 835.3 L1412.8 842.8 Z" fill="none" stroke="#fff" stroke-width="1.2" stroke-linejoin="round"/>
  <!-- eye fg -->
  <path d="M1434.5 838.5 Q1441 831.5 1447.7 838.5 Q1441 845.5 1434.5 838.5 Z" fill="none" stroke="#fff" stroke-width="1.2"/>
  <circle cx="1441.1" cy="838.5" r="1.7" fill="none" stroke="#fff" stroke-width="1.1"/>
  <!-- printer fg -->
  <path d="M1463.5 835 V832.3 H1471.5 V835 M1463.5 841.5 H1461 V835.3 Q1461 834.8 1461.7 834.8 H1473.3 Q1474 834.8 1474 835.3 V841.5 H1471.5 M1463.5 839 H1471.5 V844 H1463.5 Z" fill="none" stroke="#fff" stroke-width="1.2" stroke-linejoin="round"/>
  <!-- eye bg -->
  <path d="M1434.5 866 Q1441 859 1447.7 866 Q1441 873 1434.5 866 Z" fill="none" stroke="#777" stroke-width="1.2"/>
  <circle cx="1441.1" cy="866" r="1.7" fill="none" stroke="#777" stroke-width="1.1"/>
  <!-- printer bg -->
  <path d="M1463.5 862.5 V859.8 H1471.5 V862.5 M1463.5 869 H1461 V862.8 Q1461 862.3 1461.7 862.3 H1473.3 Q1474 862.3 1474 862.8 V869 H1471.5 M1463.5 866.5 H1471.5 V871.5 H1463.5 Z" fill="none" stroke="#777" stroke-width="1.2" stroke-linejoin="round"/>
  <!-- + - -->
  <path d="M1236.5 960.5 H1249 M1242.7 954.3 V966.7 M1265 960.3 H1278" stroke="#666" stroke-width="1.2"/>
</svg>

</body></html>
